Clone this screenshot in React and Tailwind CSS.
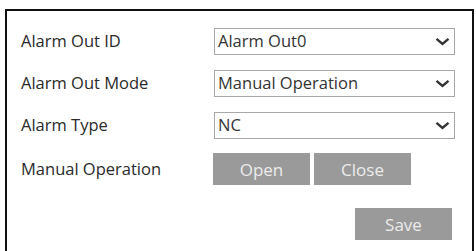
import React from 'react';

const Chevron = () => (
  <svg width="15" height="9" viewBox="0 0 15 9" className="shrink-0">
    <path d="M1.5 1.8 L7.5 7 L13.5 1.8" fill="none" stroke="#333" strokeWidth="2.4" />
  </svg>
);

const SelectBox = ({ value }) => (
  <div className="flex items-center justify-between w-[241px] h-[27px] border border-[#a8a8a8] pl-[3px] pr-[4px] text-[16.5px] leading-none text-[#333]">
    <span>{value}</span>
    <Chevron />
  </div>
);

const GrayButton = ({ children }) => (
  <button className="w-[97px] h-[32px] bg-[#9a9a9a] text-[#ececec] text-[17px] leading-none">
    {children}
  </button>
);

const Row = ({ label, children }) => (
  <div className="flex items-center">
    <div className="w-[193px] text-[16.5px] leading-none text-[#2a2a2a]">{label}</div>
    {children}
  </div>
);

export default function App() {
  return (
    <div className="bg-white w-[476px] h-[251px] overflow-hidden pt-[9px] pl-[5px]" style={{ fontFamily: '"Open Sans", "Noto Sans", sans-serif' }}>
      <div className="w-[469px] h-[260px] border-t-2 border-l-2 border-r-2 border-[#111] pt-[17px] pl-[14px]">
        <div className="flex flex-col gap-[15px]">
          <Row label="Alarm Out ID">
            <SelectBox value="Alarm Out0" />
          </Row>
          <Row label="Alarm Out Mode">
            <SelectBox value="Manual Operation" />
          </Row>
          <Row label="Alarm Type">
            <SelectBox value="NC" />
          </Row>
        </div>
        <div className="mt-[14px]">
          <Row label="Manual Operation">
            <div className="flex gap-[4px] -ml-[1px]">
              <GrayButton>Open</GrayButton>
              <GrayButton>Close</GrayButton>
            </div>
          </Row>
        </div>
        <div className="flex justify-start pl-[334px] mt-[23px]">
          <GrayButton>Save</GrayButton>
        </div>
      </div>
    </div>
  );
}
